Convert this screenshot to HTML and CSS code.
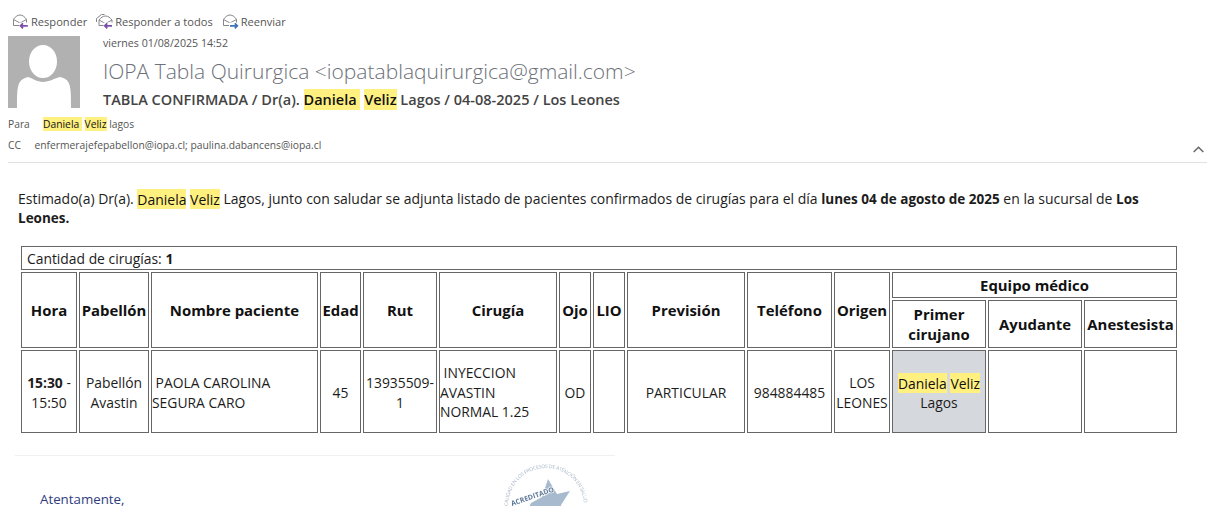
FILE: index.html
```html
<!DOCTYPE html>
<html lang="es">
<head>
<meta charset="utf-8">
<title>TABLA CONFIRMADA</title>
<link rel="stylesheet" href="styles.css">
</head>
<body>
<header class="mail-head">
  <nav class="actions">
    <span class="action">
      <svg class="act-icon" width="18" height="17" viewBox="0 0 18 17"><path d="M1.500 6.500 C3 4 5.500 2 8 2 C10.500 2 13 4 14.500 6.500 V12.500 H1.500 Z M1.500 6.500 L8 10 L14.500 6.500" fill="none" stroke="#85858c"/><path d="M7 9.500 H17 V16 H7 Z" fill="#fff"/><path d="M15.800 12.800 H8.500 M11 10.300 L8.500 12.800 L11 15.300" fill="none" stroke="#7b4fa8" stroke-width="1.800"/></svg>
      Responder</span>
    <span class="action">
      <svg class="act-icon" width="18" height="17" viewBox="0 0 18 17"><path d="M.5 9 V5.500 L5.500 1.500 H8.500 M3 7 C5 4.500 7 3 9.500 3 C12 3 14 4.500 16 7 V12.500 H3 Z M3 7 L9.500 10.500 L16 7" fill="none" stroke="#85858c"/><path d="M7.500 9.500 H17.500 V16 H7.500 Z" fill="#fff"/><path d="M16 12.800 H8.800 M11.300 10.300 L8.800 12.800 L11.300 15.300" fill="none" stroke="#7b4fa8" stroke-width="1.800"/></svg>
      Responder a todos</span>
    <span class="action">
      <svg class="act-icon" width="18" height="17" viewBox="0 0 18 17"><path d="M1.500 6.500 C3 4 5.500 2 8 2 C10.500 2 13 4 14.500 6.500 V12.500 H1.500 Z M1.500 6.500 L8 10 L14.500 6.500" fill="none" stroke="#85858c"/><path d="M7 9.500 H17 V16 H7 Z" fill="#fff"/><path d="M8 12.800 H15.300 M12.800 10.300 L15.300 12.800 L12.800 15.300" fill="none" stroke="#3f75b5" stroke-width="1.800"/></svg>
      Reenviar</span>
  </nav>
  <div class="sender">
    <svg class="avatar" width="72" height="72" viewBox="0 0 72 72"><rect width="72" height="72" fill="#b1b1b1"/><ellipse cx="35" cy="25.500" rx="14" ry="16.500" fill="#fff"/><path d="M9 72 C9 60 9 54 10.500 49 C12 44 16 42 20 41 C24 42 29 46 35 46 C41 46 47 42 52 41 C57 42 60 44 61.500 49 C63 54 63 60 63 72 Z" fill="#fff"/></svg>
    <div class="sender-text">
      <div class="date">viernes 01/08/2025 14:52</div>
      <div class="from">IOPA Tabla Quirurgica &lt;iopatablaquirurgica@gmail.com&gt;</div>
      <div class="subject">TABLA CONFIRMADA / Dr(a). <mark>Daniela&nbsp;</mark> <mark>Veliz</mark> Lagos / 04-08-2025 / Los Leones</div>
    </div>
  </div>
  <div class="rcpt rcpt-to"><span class="rcpt-label">Para</span><span><mark>Daniela&nbsp;</mark> <mark>Veliz</mark> lagos</span></div>
  <div class="rcpt rcpt-cc"><span class="rcpt-label cc">CC</span><span>enfermerajefepabellon@iopa.cl; paulina.dabancens@iopa.cl</span>
    <svg class="chevron" width="11" height="7" viewBox="0 0 11 7"><path d="M.7 6 L5.500 1.200 L10.300 6" fill="none" stroke="#666" stroke-width="1.500"/></svg>
  </div>
</header>
<main class="mail-body">
  <p class="intro">Estimado(a) Dr(a). <mark>Daniela</mark> <mark>Veliz</mark> Lagos, junto con saludar se adjunta listado de pacientes confirmados de cirugías para el día <b>lunes 04 de agosto de 2025</b> en la sucursal de <b>Los Leones.</b></p>
  <table class="surgeries">
    <colgroup>
      <col class="c-hora"><col class="c-pab"><col class="c-nom"><col class="c-edad"><col class="c-rut"><col class="c-cir"><col class="c-ojo"><col class="c-lio"><col class="c-prev"><col class="c-tel"><col class="c-ori"><col class="c-pri"><col class="c-ayu"><col class="c-ane">
    </colgroup>
    <tr class="r-count"><td colspan="14" class="count">Cantidad de cirugías: <b>1</b></td></tr>
    <tr class="r-team">
      <th rowspan="2">Hora</th><th rowspan="2">Pabellón</th><th rowspan="2">Nombre paciente</th><th rowspan="2">Edad</th><th rowspan="2">Rut</th><th rowspan="2">Cirugía</th><th rowspan="2">Ojo</th><th rowspan="2">LIO</th><th rowspan="2">Previsión</th><th rowspan="2">Teléfono</th><th rowspan="2">Origen</th>
      <th colspan="3">Equipo médico</th>
    </tr>
    <tr class="r-sub"><th>Primer cirujano</th><th>Ayudante</th><th>Anestesista</th></tr>
    <tr class="r-data">
      <td><b>15:30</b> - 15:50</td>
      <td>Pabellón Avastin</td>
      <td class="left">&nbsp;PAOLA CAROLINA SEGURA CARO</td>
      <td>45</td>
      <td>13935509-1</td>
      <td class="left narrow">&nbsp;INYECCION AVASTIN NORMAL 1.25</td>
      <td>OD</td>
      <td></td>
      <td>PARTICULAR</td>
      <td>984884485</td>
      <td>LOS LEONES</td>
      <td class="surgeon"><mark>Daniela</mark> <mark>Veliz</mark> Lagos</td>
      <td></td>
      <td></td>
    </tr>
  </table>
  <footer class="signature">
    <div class="sig-text">Atentamente,</div>
    <svg class="seal" width="90" height="90" viewBox="0 0 90 90">
      <defs><path id="seal-arc" d="M7 47 A38 38 0 0 1 83 47"/></defs>
      <text class="seal-ring" textLength="116"><textPath href="#seal-arc">CALIDAD EN LOS PROCESOS DE ATENCIÓN EN SALUD</textPath></text>
      <polygon points="47,20 56,35 69,32 60,46 62,60 22,60 30,44 41,38" fill="#a8bbce"/>
      <text class="seal-word" x="11" y="47" transform="rotate(-19 11 47)">ACREDITADO</text>
    </svg>
  </footer>
</main>
</body>
</html>
```

FILE: styles.css
```css
html, body { margin: 0; padding: 0; height: 506px; overflow: hidden; background: #fff; }
body { font-family: "Open Sans", "Noto Sans", sans-serif; color: #1c1c1c; font-size: 13.870px; }
mark { background: #fff080; color: #111; }
.mail-head { margin: 0 8px; height: 163px; border-bottom: 1px solid #e1e1e1; box-sizing: border-box; }
.actions { display: flex; padding: 13px 0 0 4px; height: 36px; box-sizing: border-box; gap: 9px; color: #555; font-size: 11.100px; }
.action { display: flex; align-items: center; gap: 1px; height: 16px; }
.act-icon { flex: none; }
.sender { display: flex; height: 72px; }
.avatar { flex: none; }
.sender-text { margin-left: 23px; }
.date { font-size: 10.650px; color: #555; line-height: 14px; }
.from { font-size: 21px; font-weight: 300; color: #6c7078; line-height: 28px; margin-top: 7px; }
.subject { font-size: 14.500px; font-weight: 600; color: #444; line-height: 20px; margin-top: 5px; }
.subject mark { padding: 1px 0; }
.rcpt { display: flex; align-items: center; font-size: 10.300px; color: #555; height: 21px; }
.rcpt-to { margin-top: 5px; }
.rcpt-label { width: 35px; }
.rcpt-label.cc { width: 26.500px; }
.chevron { margin-left: auto; margin-right: 3px; margin-top: 9px; }
.mail-body { position: relative; padding: 26px 18px 0; }
.intro { margin: 0; line-height: 19px; width: 1135px; font-size: 13.970px; }
.intro b { font-size: 13.500px; line-height: 0; }
.intro mark { padding: .5px 0; }
.surgeries { border-collapse: separate; border-spacing: 2px; table-layout: fixed; width: 1160px; margin: 17px 0 0 1px; }
.surgeries th, .surgeries td { border: 1px solid #666; padding: 0; text-align: center; line-height: 20px; }
.surgeries td { padding-top: 2px; line-height: 19.500px; }
.surgeries th { font-weight: 700; font-size: 14.900px; color: #111; }
.surgeries .count { text-align: left; padding-left: 5px; }
.surgeries .left { text-align: left; }
.surgeries .narrow { padding-right: 5px; }
.surgeries .surgeon { background: #d5d8dc; }
.surgeon mark { padding: .5px 0; }
.r-count { height: 24px; }
.r-team { height: 26px; }
.r-sub { height: 48px; }
.r-data { height: 83px; }
.c-hora { width: 56px; } .c-pab { width: 70px; } .c-nom { width: 167px; } .c-edad { width: 41px; }
.c-rut { width: 74px; } .c-cir { width: 118px; } .c-ojo { width: 32px; } .c-lio { width: 32px; }
.c-prev { width: 118px; } .c-tel { width: 85px; } .c-ori { width: 56px; } .c-pri { width: 94px; }
.c-ayu { width: 94px; } .c-ane { width: 93px; }
.signature { position: relative; width: 600px; margin-top: 20px; margin-left: -3px; border-top: 1px solid #f0f0f0; height: 52px; overflow: hidden; }
.sig-text { padding: 35px 0 0 25px; color: #2f3d80; font-size: 13.300px; line-height: 16px; }
.seal { position: absolute; left: 486px; top: 3px; filter: blur(.35px); }
.seal-ring { font-size: 5px; fill: #a8b6c8; }
.seal-word { font-size: 7px; font-weight: 700; fill: #5c7896; stroke: #fff; stroke-width: 1.500px; paint-order: stroke; }
```
